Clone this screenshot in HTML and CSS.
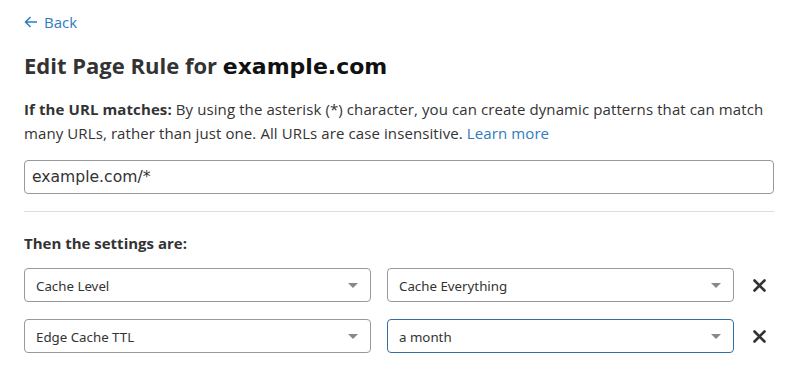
FILE: index.html
```html
<!DOCTYPE html>
<html lang="en">
  <head>
    <meta charset="UTF-8" />
    <meta name="viewport" content="width=device-width, initial-scale=1.0" />
    <title>Edit Page Rule</title>
    <link rel="stylesheet" href="styles.css">
  </head>
  <body>
    <div class="page">
      <a class="back-link" href="#">
        <svg width="14" height="12" viewBox="0 0 14 12">
          <path d="M13 6 H1.5 M6.5 1 L1.5 6 L6.5 11" fill="none" stroke="#2f7bbf" stroke-width="1.5" />
        </svg>
        Back
      </a>

      <h1 class="title">Edit Page Rule for <span class="domain">example.com</span></h1>

      <p class="help">
        <strong>If the URL matches:</strong> By using the asterisk (*) character, you can create dynamic patterns that can match many URLs, rather than just one. All URLs are case insensitive. <a href="#">Learn more</a>
      </p>

      <input class="url-input" type="text" value="example.com/*" />

      <hr class="divider" />

      <h3 class="section-label">Then the settings are:</h3>

      <div class="setting-row">
        <div class="select">
          <span>Cache Level</span>
          <span class="caret"></span>
        </div>
        <div class="select">
          <span>Cache Everything</span>
          <span class="caret"></span>
        </div>
        <button class="remove" type="button" aria-label="Remove">
          <svg width="13" height="13" viewBox="0 0 13 13">
            <path d="M1.5 1.5 L11.5 11.5 M11.5 1.5 L1.5 11.5" stroke="#333" stroke-width="2.6" stroke-linecap="round" />
          </svg>
        </button>
      </div>

      <div class="setting-row">
        <div class="select">
          <span>Edge Cache TTL</span>
          <span class="caret"></span>
        </div>
        <div class="select focused">
          <span>a month</span>
          <span class="caret"></span>
        </div>
        <button class="remove" type="button" aria-label="Remove">
          <svg width="13" height="13" viewBox="0 0 13 13">
            <path d="M1.5 1.5 L11.5 11.5 M11.5 1.5 L1.5 11.5" stroke="#333" stroke-width="2.6" stroke-linecap="round" />
          </svg>
        </button>
      </div>
    </div>
  </body>
</html>
```

FILE: styles.css
```css
body {
  margin: 0;
  background: #fff;
  color: #333;
  font-family: "Open Sans", "Noto Sans", sans-serif;
}
.page {
  width: 750px;
  padding: 10px 24px 0;
}
.back-link {
  display: inline-flex;
  align-items: center;
  gap: 6px;
  color: #2f7bbf;
  text-decoration: none;
  font-size: 15px;
  line-height: 24px;
}
.title {
  margin: 16px 0 0;
  font-size: 22px;
  line-height: 30px;
  font-weight: 700;
  color: #333;
}
.domain {
  font-family: "DejaVu Sans", sans-serif;
  color: #111;
}
.help {
  margin: 15px 0 0;
  font-size: 15px;
  line-height: 24px;
  letter-spacing: 0.1px;
}
.help strong {
  font-weight: 700;
}
.help a {
  color: #2f7bbf;
  text-decoration: none;
}
.url-input {
  display: block;
  box-sizing: border-box;
  width: 100%;
  height: 34px;
  margin-top: 15px;
  padding: 0 7px;
  border: 1px solid #999;
  border-radius: 4px;
  font-family: "DejaVu Sans", sans-serif;
  font-size: 15.6px;
  color: #333;
}
.divider {
  border: 0;
  border-top: 1px solid #ddd;
  margin: 17px 0 0;
}
.section-label {
  margin: 20px 0 0;
  font-size: 15px;
  line-height: 22px;
  font-weight: 700;
}
.setting-row {
  display: flex;
  align-items: center;
  gap: 16px;
  margin-top: 14px;
}
.setting-row + .setting-row {
  margin-top: 17px;
}
.select {
  box-sizing: border-box;
  width: 347px;
  height: 34px;
  display: flex;
  align-items: center;
  justify-content: space-between;
  padding: 2px 12px 0 11px;
  border: 1px solid #999;
  border-radius: 4px;
  font-family: "Noto Sans", sans-serif;
  font-size: 13.3px;
  color: #333;
}
.select.focused {
  border-color: #2f6fa8;
}
.caret {
  width: 0;
  height: 0;
  margin-top: -2px;
  border-left: 5px solid transparent;
  border-right: 5px solid transparent;
  border-top: 5px solid #888;
}
.remove {
  border: 0;
  background: none;
  padding: 0;
  margin-left: -1px;
  width: 20px;
  height: 20px;
  display: flex;
  align-items: center;
  justify-content: center;
  cursor: pointer;
}
```
